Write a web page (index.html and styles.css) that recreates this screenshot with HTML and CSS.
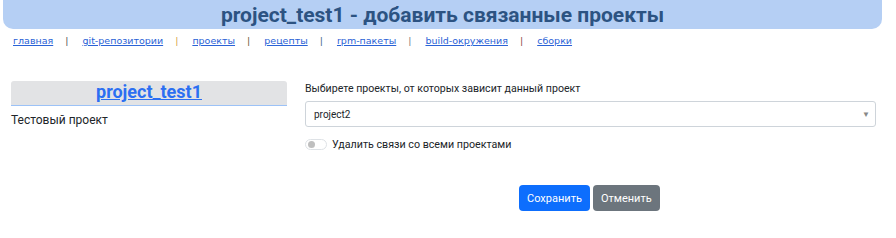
FILE: index.html
```html
<!DOCTYPE html>
<html lang="ru">
<head>
  <meta charset="UTF-8" />
  <title>project_test1 - добавить связанные проекты</title>
  <link rel="stylesheet" href="styles.css">
</head>
<body>
  <div class="header">
    <h1>project_test1 - добавить связанные проекты</h1>
  </div>

  <div class="nav">
    <a href="#">главная</a><span class="sep s1">|</span>
    <a href="#">git-репозитории</a><span class="sep s2">|</span>
    <a href="#">проекты</a><span class="sep s3">|</span>
    <a href="#">рецепты</a><span class="sep s4">|</span>
    <a href="#">rpm-пакеты</a><span class="sep s5">|</span>
    <a href="#">build-окружения</a><span class="sep s6">|</span>
    <a href="#">сборки</a>
  </div>

  <div class="content">
    <div class="left">
      <div class="project-title"><a href="#">project_test1</a></div>
      <p class="descr">Тестовый проект</p>
    </div>

    <div class="right">
      <label class="label">Выбирете проекты, от которых зависит данный проект</label>
      <div class="select">
        <span>project2</span>
        <span class="arrow">&#9660;</span>
      </div>
      <div class="switch-row">
        <span class="switch"><span class="knob"></span></span>
        <span>Удалить связи со всеми проектами</span>
      </div>
      <div class="buttons">
        <button class="btn btn-primary">Сохранить</button>
        <button class="btn btn-secondary">Отменить</button>
      </div>
    </div>
  </div>
</body>
</html>
```

FILE: styles.css
```css
body {
  margin: 0;
  font-family: Roboto, 'Liberation Sans', sans-serif;
  color: #212529;
  background: #fff;
}

.header {
  margin: 0 14px 0 3px;
  height: 29px;
  background-color: #b5cff4;
  border-radius: 0 0 10px 10px;
  display: flex;
  align-items: center;
  justify-content: center;
}

.header h1 {
  margin: 0;
  font-size: 21px;
  font-weight: bold;
  color: #2c5382;
}

.nav {
  padding: 6px 0 0 13px;
  font-family: 'DejaVu Sans', sans-serif;
  font-size: 9.5px;
  height: 14px;
}

.nav a {
  color: #2a62d6;
}

.sep {
  margin: 0 11px 0 12px;
}
.s1 { color: #555; }
.s2 { color: #d6a64a; }
.s3 { color: #6a5a3a; }
.s4 { color: #4a6a8a; }
.s5 { color: #7a7a7a; }
.s6 { color: #8a4a4a; }

.content {
  display: flex;
  padding: 32px 0 0 11px;
}

.left {
  width: 276px;
}

.project-title {
  background-color: #e2e3e5;
  border-bottom: 1px solid #9cc2f7;
  border-radius: 3px 3px 0 0;
  height: 24px;
  text-align: center;
  line-height: 22px;
}

.project-title a {
  font-size: 18px;
  font-weight: bold;
  color: #2b6ff2;
}

.descr {
  margin: 7px 0 0;
  font-size: 12px;
}

.right {
  margin-left: 18px;
  width: 571px;
}

.label {
  display: block;
  font-size: 10.6px;
  margin-top: 1px;
  line-height: 14px;
}

.select {
  margin-top: 5px;
  height: 24px;
  border: 1px solid #ced4da;
  border-radius: 3px;
  display: flex;
  align-items: center;
  justify-content: space-between;
  padding: 0 5px 0 8px;
  font-size: 10px;
}

.arrow {
  color: #888;
  font-size: 8px;
}

.switch-row {
  display: flex;
  align-items: center;
  gap: 5px;
  margin-top: 11px;
  font-size: 10.7px;
}

.switch {
  width: 18px;
  height: 9px;
  border: 1px solid #dee2e6;
  border-radius: 6px;
  display: flex;
  align-items: center;
  padding-left: 2px;
  box-sizing: content-box;
}

.knob {
  width: 7px;
  height: 7px;
  border-radius: 50%;
  background: #bfbfbf;
}

.buttons {
  display: flex;
  gap: 3px;
  margin: 34px 0 0 214px;
}

.btn {
  font-family: Roboto, 'Liberation Sans', sans-serif;
  font-size: 11px;
  color: #fff;
  border: none;
  border-radius: 4px;
  height: 26px;
  padding: 0 8px;
}

.btn-primary {
  background-color: #0d6efd;
}

.btn-secondary {
  background-color: #6c757d;
}
```
